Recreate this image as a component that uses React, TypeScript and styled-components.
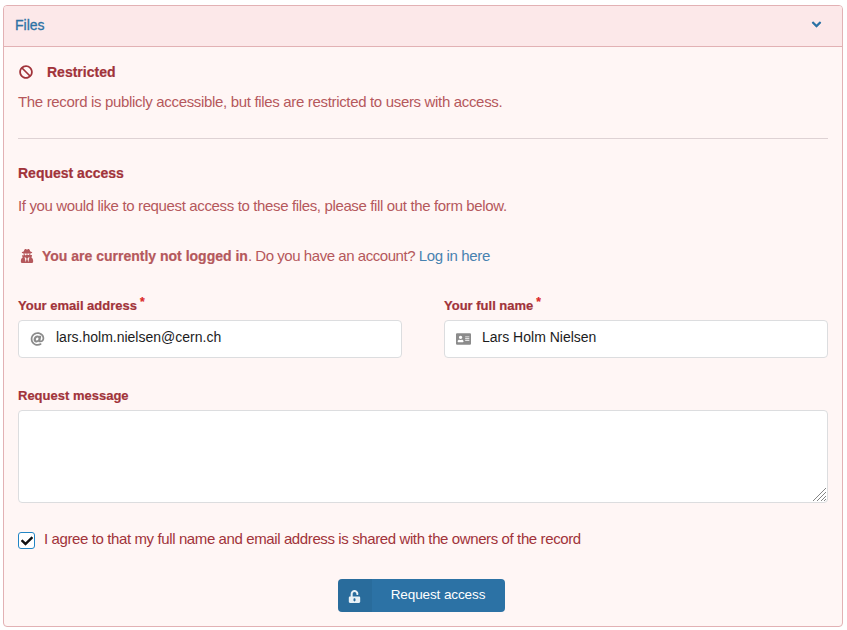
import React from "react";
import styled, { createGlobalStyle } from "styled-components";
import {
  FaAddressCard,
  FaAngleDown,
  FaAt,
  FaBan,
  FaCheck,
  FaUnlockAlt,
  FaUserSecret,
} from "react-icons/fa";

const GlobalStyle = createGlobalStyle`
  *, *::before, *::after { box-sizing: border-box; }
  body {
    margin: 0;
    background: #fff;
    color: #a1333a;
    font: 14px/20px "Liberation Sans", Arial, sans-serif;
    -webkit-font-smoothing: antialiased;
  }
`;

const Page = styled.main`
  padding: 5px 4px 3px 3px;
`;

const Panel = styled.section`
  height: 622px;
  border: 1px solid #e2b1b4;
  border-radius: 4px;
  background: #fff6f5;
  overflow: hidden;
`;

const PanelHeader = styled.header`
  display: flex;
  justify-content: space-between;
  align-items: center;
  height: 41px;
  padding: 0 18px 3px 11px;
  border-bottom: 1px solid #e2b1b4;
  background: #fce8e9;
  color: #2c72a5;
  -webkit-text-stroke: 0.3px currentColor;
  svg { margin-top: -1px; }
`;

const PanelBody = styled.div`
  padding: 15px 14px 0;
`;

const Text = styled.span<{ $size?: number; $spacing?: number }>`
  font-size: ${(p) => p.$size ?? 14}px;
  letter-spacing: ${(p) => p.$spacing ?? 0}px;
  white-space: pre;
`;

const Heading = styled.h3`
  display: flex;
  align-items: center;
  height: 20px;
  margin: 0;
  font-size: 14px;
  font-weight: 700;
  -webkit-text-stroke: 0.2px currentColor;
  svg { margin: -1px 14px 0 1px; }
`;

const Paragraph = styled.p<{ $top: number }>`
  display: flex;
  align-items: center;
  height: 20px;
  margin: ${(p) => p.$top}px 0 0;
  color: #b5585c;
  svg { margin: 0 8px 0 2px; }
  strong { -webkit-text-stroke: 0.2px currentColor; }
`;

const Divider = styled.hr`
  height: 1px;
  margin: 26px 0 24px;
  border: 0;
  background: #ded2d4;
`;

const Link = styled.a`
  color: #4882b0;
  text-decoration: none;
`;

const FieldRow = styled.div`
  display: grid;
  grid-template-columns: 1fr 1fr;
  column-gap: 42px;
  margin-top: 30px;
`;

const Label = styled.label`
  display: flex;
  height: 18px;
  margin-bottom: 6px;
  font-size: 13px;
  font-weight: 700;
  line-height: 19px;
  -webkit-text-stroke: 0.2px currentColor;
`;

const Required = styled.span`
  margin: -3px 0 0 3px;
  color: #db2828;
  font-size: 12px;
`;

const InputBox = styled.div`
  display: flex;
  align-items: center;
  height: 38px;
  padding-left: 11px;
  border: 1px solid #dcdddf;
  border-radius: 4px;
  background: #fff;
  svg { flex: none; width: 15px; color: #8b8b8b; margin-top: -1px; }
`;

const Input = styled.input`
  flex: 1;
  min-width: 0;
  height: 34px;
  margin: -4px 0 0 11px;
  padding: 0;
  border: 0;
  outline: 0;
  background: transparent;
  color: #1c1c1d;
  font: inherit;
`;

const MessageField = styled.div`
  margin-top: 28px;
`;

const MessageBox = styled.div`
  position: relative;
`;

const Grip = styled.svg`
  position: absolute;
  right: 2px;
  bottom: 2px;
  pointer-events: none;
`;

const Message = styled.textarea`
  display: block;
  width: 100%;
  height: 93px;
  padding: 10px 14px;
  border: 1px solid #dcdddf;
  border-radius: 4px;
  background: #fff;
  font: inherit;
  resize: none;
`;

const Consent = styled.div`
  display: flex;
  align-items: center;
  height: 20px;
  margin-top: 26px;
`;

const Checkbox = styled.span`
  display: grid;
  place-items: center;
  width: 17px;
  height: 17px;
  margin: 3px 9px 0 0;
  padding-top: 1px;
  border: 1px solid #2185c5;
  border-radius: 3px;
  background: #fff;
  color: #111;
`;

const Actions = styled.div`
  display: flex;
  justify-content: center;
  margin: 30px 3px 0 0;
`;

const Button = styled.button`
  display: flex;
  width: 167px;
  height: 33px;
  padding: 0;
  border: 0;
  border-radius: 4px;
  overflow: hidden;
  background: #2c72a5;
  color: #fff;
  font: inherit;
`;

const ButtonIcon = styled.span`
  display: grid;
  place-items: center;
  width: 34px;
  height: 100%;
  padding: 2px 1px 0 0;
  background: rgba(0, 0, 0, 0.05);
  color: #e9f1f6;
`;

const ButtonLabel = styled.span`
  flex: 1;
  padding-right: 1px;
  line-height: 31px;
  text-align: center;
`;

export default function App() {
  return (
    <Page>
      <GlobalStyle />
      <Panel>
        <PanelHeader>
          <Text>Files</Text>
          <FaAngleDown size={15} />
        </PanelHeader>
        <PanelBody>
          <Heading>
            <FaBan size={14} />
            <Text>Restricted</Text>
          </Heading>
          <Paragraph $top={10}>
            <Text $size={15} $spacing={-0.33}>
              The record is publicly accessible, but files are restricted to users with access.
            </Text>
          </Paragraph>
          <Divider />
          <Heading>
            <Text>Request access</Text>
          </Heading>
          <Paragraph $top={13}>
            <Text $size={15} $spacing={-0.36}>
              If you would like to request access to these files, please fill out the form below.
            </Text>
          </Paragraph>
          <Paragraph $top={30}>
            <FaUserSecret size={14} />
            <Text as="strong">You are currently not logged in</Text>
            <Text $size={15} $spacing={-0.45}>{". Do you have an account? "}</Text>
            <Link href="#login">
              <Text $size={15} $spacing={-0.36}>Log in here</Text>
            </Link>
          </Paragraph>
          <FieldRow>
            <div>
              <Label htmlFor="email">
                <Text $size={13}>Your email address</Text>
                <Required>*</Required>
              </Label>
              <InputBox>
                <FaAt size={14} />
                <Input id="email" defaultValue="lars.holm.nielsen@cern.ch" />
              </InputBox>
            </div>
            <div>
              <Label htmlFor="name">
                <Text $size={13}>Your full name</Text>
                <Required>*</Required>
              </Label>
              <InputBox>
                <FaAddressCard size={14} />
                <Input id="name" defaultValue="Lars Holm Nielsen" />
              </InputBox>
            </div>
          </FieldRow>
          <MessageField>
            <Label htmlFor="message">
              <Text $size={13}>Request message</Text>
            </Label>
            <MessageBox>
              <Message id="message" />
              <Grip width="13" height="13" viewBox="0 0 13 13" fill="none" stroke="#777" strokeWidth="0.9">
                <path d="M0 13 13 0M4 13 13 4M8 13 13 8M11 13 13 11" />
              </Grip>
            </MessageBox>
          </MessageField>
          <Consent>
            <Checkbox role="checkbox" aria-checked="true" aria-labelledby="consent">
              <FaCheck size={12} />
            </Checkbox>
            <Text id="consent" $size={15} $spacing={-0.39}>
              I agree to that my full name and email address is shared with the owners of the record
            </Text>
          </Consent>
          <Actions>
            <Button type="button">
              <ButtonIcon>
                <FaUnlockAlt size={13} />
              </ButtonIcon>
              <ButtonLabel>
                <Text $size={13.5} $spacing={-0.1}>Request access</Text>
              </ButtonLabel>
            </Button>
          </Actions>
        </PanelBody>
      </Panel>
    </Page>
  );
}
